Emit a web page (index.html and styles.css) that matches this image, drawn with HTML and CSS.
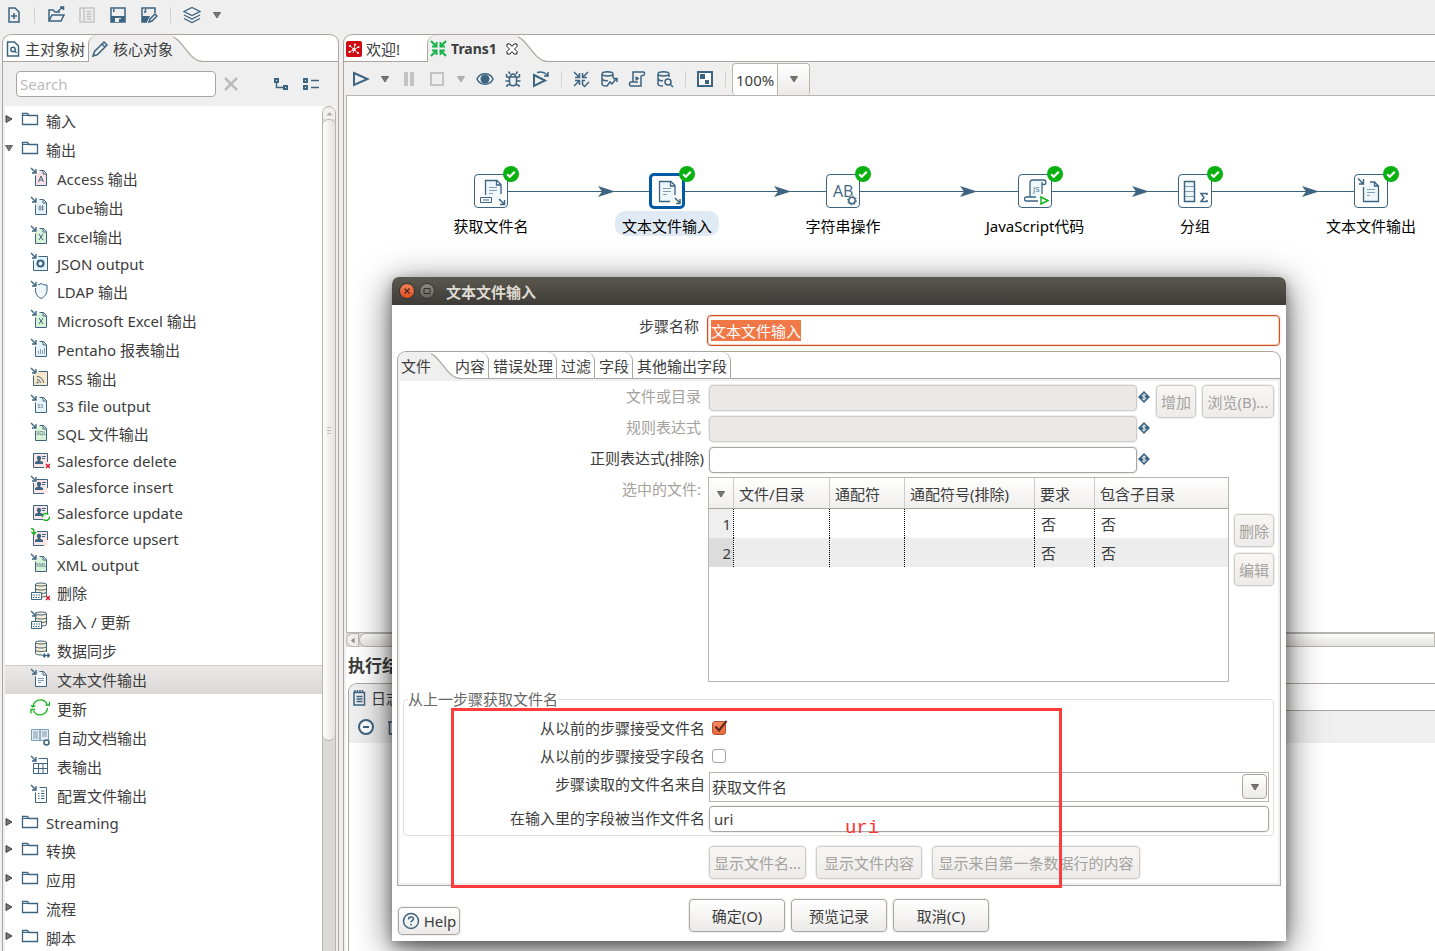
FILE: index.html
```html
<!DOCTYPE html>
<html lang="zh-CN">
<head>
<meta charset="utf-8">
<title>Trans1</title>
<link rel="stylesheet" href="styles.css">
</head>
<body>
<svg class="defs" aria-hidden="true">
  <defs>
    <symbol id="in" viewBox="0 0 20 20"><path class="s a" d="M1 1l4 4M6 2V6H2"/></symbol>
    <symbol id="page" viewBox="0 0 20 20"><path d="M5.500 8.500V18.500H16.500V7L13 3.500H9.500L5.500 8.500z" stroke="none"/><path class="s n" d="M5.500 8.500V18.500H16.500V6.500L13.500 3.500H9.500M13 3.500V7H16.500"/></symbol>
    <symbol id="sq" viewBox="0 0 20 20"><path d="M3.500 8.500V18.500H17.500V4.500H8.500L3.500 8.500z" stroke="none"/><path class="s n" d="M3.500 8.500V18.500H17.500V4.500H8.500"/></symbol>
    <symbol id="card" viewBox="0 0 20 20"><path d="M3.500 4.500h14v14h-14z" fill="#fbe4e6" stroke="none"/><path class="s n" d="M14 18.500H3.500V4.500h14V13"/><circle class="f" cx="9" cy="9" r="2.200"/><path class="f" d="M5 15v-2l3-1.500V10h2v1.500l3 1.500v2z"/><path class="s n" d="M12 7.500h4M12 9.500h3"/></symbol>
    <symbol id="db" viewBox="0 0 20 20"><path d="M5.500 3.500c0-2 11-2 11 0v11c0 2-11 2-11 0z" fill="#fbeed2"/><path class="s n" d="M5.500 3.500c0-2 11-2 11 0v11c0 2-11 2-11 0zM5.500 3.500c0 2 11 2 11 0M5.500 7.500c0 2 11 2 11 0M5.500 11c0 2 11 2 11 0"/></symbol>
    <symbol id="grid" viewBox="0 0 20 20"><path d="M1.500 11.500h10v7h-10z" fill="#fff" stroke="#3d6480"/><path class="s n" d="M1 14h11M3 16.500h7" stroke-dasharray="1.500 1"/></symbol>
    <symbol id="del" viewBox="0 0 20 20"><path d="M16 15l4 4m0-4l-4 4" stroke="#d8152c" stroke-width="1.500"/></symbol>
    <symbol id="folder" viewBox="0 0 18 16"><path class="s m" d="M1.500 13.500V2.500H6.500L8 4.500H16.500V13.500z"/><path class="s n" d="M1.500 4.500H8"/></symbol>
    <symbol id="right" viewBox="0 0 8 10"><path d="M1 1.500L7 5L1 8.500z" fill="#777" stroke="#444"/></symbol>
    <symbol id="down" viewBox="0 0 8 8"><path d="M.500 1.500h7L4 7z" fill="#777" stroke="#666"/></symbol>
    <symbol id="check" viewBox="0 0 16 16"><circle cx="8" cy="8" r="8" fill="#0bb011"/><path d="M4.200 8.200l2.600 2.600 5-5" stroke="#fff" stroke-width="2.200" fill="none"/></symbol>
    <symbol id="var" viewBox="0 0 12 12"><path class="f" d="M6 0l6 6-6 6-6-6z"/><path d="M8 4.300C7 3.200 4.300 3.500 4.300 4.800S7.800 6 7.800 7.300 5 8.900 4 7.700M6 2.500v7" stroke="#fff" stroke-width=".9" fill="none"/></symbol>
    <symbol id="curve" viewBox="0 0 38 28"><path d="M0 .500C18 .500 22 27.500 38 27.500V28H0z" fill="#efefef"/><path d="M0 .500C18 .500 22 27.500 38 27.500" fill="none" stroke="#aaa69f" stroke-width="1.200"/></symbol>
    <symbol id="floppy" viewBox="0 0 18 18"><path class="s t" d="M2 2h14v14H2z"/><path class="f" d="M2 10h14v6H2zM4 3h1.500v3H4z"/><path d="M6 12h6v4H6z" fill="#efefef"/><path class="f" d="M10 13h2v3h-2z"/></symbol>
  </defs>
</svg>

<header class="main-bar">
  <button class="tool" aria-label="新建"><svg width="18" height="18" viewBox="0 0 18 18"><path class="s t" d="M4 2h6l4 4v10H4zM9 7v6M6 10h6"/></svg></button>
  <i class="sep"></i>
  <button class="tool" aria-label="打开"><svg width="18" height="18" viewBox="0 0 18 18"><path class="s t" d="M2 15V4h4l2 2h5M2 15L5 9h12l-3 6zM11 5l5-4M13 1h3.500v3"/></svg></button>
  <button class="tool" aria-label="浏览" disabled><svg width="18" height="18" viewBox="0 0 18 18"><path d="M2 2h14v14H2zM6 2v14M8.500 5.500h5M8.500 8h5M8.500 10.500h5M8.500 13h5" fill="none" stroke="#c3c3c3" stroke-width="1.500"/></svg></button>
  <button class="tool" aria-label="保存"><svg width="18" height="18"><use href="#floppy"/></svg></button>
  <button class="tool" aria-label="另存为"><svg width="18" height="18" viewBox="0 0 18 18"><path class="s t" d="M7 16H2V2h13v5M4 6h1.500V3"/><path class="f" d="M2 10h8l-3 6H2z"/><path class="s t" d="M9 16l1-3 5-5 2 2-5 5z"/></svg></button>
  <i class="sep"></i>
  <button class="tool" aria-label="视图"><svg width="18" height="18" viewBox="0 0 18 18"><path class="s m" d="M9 1.500l8 4-8 4-8-4zM1 9l8 4 8-4M1 12.500l8 4 8-4"/></svg></button>
  <button class="caret" aria-label="视图菜单"><svg width="8" height="8"><use href="#down"/></svg></button>
</header>

<main class="workspace">
  <aside class="side">
    <nav class="tabs">
      <button class="tab"><svg width="16" height="18" viewBox="0 0 16 18"><path class="s t" d="M2.500 2h7L13.500 6v10H2.500z"/><circle class="s t" cx="8" cy="9.500" r="2.200"/><path class="s t" d="M9.500 11l2 2"/></svg>主对象树</button>
      <button class="tab active"><svg width="18" height="18" viewBox="0 0 18 18"><path class="s t" d="M2 16l1.500-4.500L13 2l3 3-9.500 9.500zM11 4l3 3"/></svg>核心对象</button><svg class="curve" width="38" height="28"><use href="#curve"/></svg>
    </nav>
    <div class="finder">
      <input class="search" type="text" placeholder="Search" aria-label="Search">
      <button class="tool" aria-label="清除"><svg width="16" height="16" viewBox="0 0 16 16"><path d="M2 2l12 12M14 2L2 14" stroke="#bcbcbc" stroke-width="2.500"/></svg></button>
      <span class="grow"></span>
      <button class="tool" aria-label="展开"><svg width="16" height="16" viewBox="0 0 16 16"><path class="s b" d="M2 3h3v3H2zM11 10h3v3h-3z"/><path class="s t" d="M3.500 6v5.500H10"/></svg></button>
      <button class="tool" aria-label="折叠"><svg width="18" height="16" viewBox="0 0 18 16"><path class="s b" d="M2 3h3v3H2zM2 10h3v3H2z"/><path class="s t" d="M9 4.500h8M9 11.500h8"/></svg></button>
    </div>
    <div class="tree-wrap">
      <ul class="tree">
        <li class="dir"><svg class="tw"><use href="#right"/></svg><svg class="fo"><use href="#folder"/></svg>输入</li>
        <li class="dir"><svg class="tw"><use href="#down"/></svg><svg class="fo"><use href="#folder"/></svg>输出</li>
        <li><svg class="ic" viewBox="0 0 20 20"><use href="#in"/><use href="#page" fill="#fde3e6"/><path class="s n" d="M8.500 15L11 9l2.500 6M9.500 13h3"/></svg>Access 输出</li>
        <li><svg class="ic" viewBox="0 0 20 20"><use href="#in"/><use href="#page" fill="#e8f4fb"/><path class="s h" d="M10 9v6M12.500 9v6M8 11h6M8 13h6"/></svg>Cube输出</li>
        <li><svg class="ic" viewBox="0 0 20 20"><use href="#in"/><use href="#page" fill="#d8f2d8"/><path class="s n" d="M9 9l4 6M13 9l-4 6"/></svg>Excel输出</li>
        <li class="lat"><svg class="ic" viewBox="0 0 20 20"><use href="#in"/><use href="#sq" fill="#e8f4fb"/><circle cx="10.500" cy="11.500" r="3" fill="none" stroke="#3d6480" stroke-width="2.200"/></svg>JSON output</li>
        <li><svg class="ic" viewBox="0 0 20 20"><use href="#in"/><path d="M5.500 8v2c0 4 2 7 5.500 8.500 3.500-1.500 6-4.500 6-8.500V5c-3 0-4-.500-6-1.500L8 5" fill="#eef7fc" stroke="#3d6480"/></svg>LDAP 输出</li>
        <li><svg class="ic" viewBox="0 0 20 20"><use href="#in"/><use href="#page" fill="#d8f2d8"/><path class="s n" d="M9 9l4 6M13 9l-4 6"/></svg>Microsoft Excel 输出</li>
        <li><svg class="ic" viewBox="0 0 20 20"><use href="#in"/><use href="#page" fill="#e8f4fb"/><path class="s h" d="M8.500 16v-3M10.500 16v-5M12.500 16v-4M14.500 16v-6"/></svg>Pentaho 报表输出</li>
        <li><svg class="ic" viewBox="0 0 20 20"><use href="#in"/><use href="#sq" fill="#fbe6c8"/><path class="s n" d="M7 12.500a3.500 3.500 0 0 1 3.500 3.500M7 9.500a6.500 6.500 0 0 1 6.500 6.500"/><circle class="f" cx="7.500" cy="15.500" r="1"/></svg>RSS 输出</li>
        <li class="lat"><svg class="ic" viewBox="0 0 20 20"><use href="#in"/><use href="#page" fill="#e8f4fb"/><text class="tiny" x="7.500" y="14">S3</text></svg>S3 file output</li>
        <li><svg class="ic" viewBox="0 0 20 20"><use href="#in"/><use href="#page" fill="#d8f2d8"/><text class="tiny" x="6.500" y="13">SQL</text></svg>SQL 文件输出</li>
        <li class="lat"><svg class="ic" viewBox="0 0 20 20"><use href="#card"/><use href="#del"/></svg>Salesforce delete</li>
        <li class="lat"><svg class="ic" viewBox="0 0 20 20"><use href="#card"/><path d="M0 0h7v8H0z" fill="#fff"/><use href="#in"/></svg>Salesforce insert</li>
        <li class="lat"><svg class="ic" viewBox="0 0 20 20"><use href="#card"/><circle cx="16" cy="16" r="3.500" fill="#fff" stroke="#15b01a" stroke-width="1.500" stroke-dasharray="8 2.500"/></svg>Salesforce update</li>
        <li class="lat"><svg class="ic" viewBox="0 0 20 20"><use href="#card"/><path d="M0 0h7v8H0z" fill="#fff"/><path d="M1 1.500c3 0 3 2 3 5M1.500 5L4 7.500 6 5" fill="none" stroke="#15b01a" stroke-width="1.400"/></svg>Salesforce upsert</li>
        <li class="lat"><svg class="ic" viewBox="0 0 20 20"><use href="#in"/><use href="#page" fill="#d8f2d8"/><text class="tiny" x="6" y="14">XML</text></svg>XML output</li>
        <li><svg class="ic" viewBox="0 0 20 20"><use href="#db"/><use href="#grid"/><use href="#del"/></svg>删除</li>
        <li><svg class="ic" viewBox="0 0 20 20"><use href="#db"/><path d="M0 0h7v7H0z" fill="#fff"/><use href="#in"/><use href="#grid"/></svg>插入 / 更新</li>
        <li><svg class="ic" viewBox="0 0 20 20"><use href="#db"/><path d="M12 13h8v7h-8z" fill="#fff"/><path class="s m" d="M13 16.500h6.500M15 14.500l-2 2 2 2M17.500 14.500l2 2-2 2"/></svg>数据同步</li>
        <li class="sel"><svg class="ic" viewBox="0 0 20 20"><use href="#in"/><use href="#page" fill="#f2f8fc"/><path class="s h" d="M8 10.500h6M8 12.500h6M8 14.500h3"/></svg>文本文件输出</li>
        <li><svg class="ic" viewBox="0 0 20 20"><path d="M3 9a7.500 7.500 0 0 1 14-2M17.500 11a7.500 7.500 0 0 1-14 3M19.500 4.500V8H15.500M1 16.500v-4h4M1 8.500l2 1.500 2.500-1.500" fill="none" stroke="#15b01a" stroke-width="1.300"/></svg>更新</li>
        <li><svg class="ic" viewBox="0 0 20 20"><path d="M1.500 3.500h8.500v11H1.500zM10 3.500h8.500v11H10z" fill="#e3edf4" stroke="#7f9db2"/><path class="s h" d="M3 6h5M3 8h5M3 10h5M3 12h5M12 6h5M12 8h5M12 10h5"/><circle cx="16.500" cy="16.500" r="2.500" fill="#fff" stroke="#3d6480" stroke-width="1.500"/></svg>自动文档输出</li>
        <li><svg class="ic" viewBox="0 0 20 20"><use href="#in"/><path class="s n" d="M3.500 8.500v10h14v-15h-9M3.500 8.500h14M3.500 13.500h14M8.500 8.500v10M13 8.500v10"/></svg>表输出</li>
        <li><svg class="ic" viewBox="0 0 20 20"><use href="#in"/><path class="s n" d="M5.500 8.500v10h11v-15h-7M8 9.500h1.500M8 12h1.500M8 14.500h1.500M11 7h3.500M11 9.500h3.500M11 12h3.500M11 14.500h3.500"/></svg>配置文件输出</li>
        <li class="dir lat"><svg class="tw"><use href="#right"/></svg><svg class="fo"><use href="#folder"/></svg>Streaming</li>
        <li class="dir"><svg class="tw"><use href="#right"/></svg><svg class="fo"><use href="#folder"/></svg>转换</li>
        <li class="dir"><svg class="tw"><use href="#right"/></svg><svg class="fo"><use href="#folder"/></svg>应用</li>
        <li class="dir"><svg class="tw"><use href="#right"/></svg><svg class="fo"><use href="#folder"/></svg>流程</li>
        <li class="dir"><svg class="tw"><use href="#right"/></svg><svg class="fo"><use href="#folder"/></svg>脚本</li>
      </ul>
      <div class="vscroll"><div class="up"><svg width="7" height="5" viewBox="0 0 7 5"><path d="M3.500 1L6.500 4.500h-6z" fill="#b0ada8"/></svg></div><div class="thumb"><i></i></div></div>
    </div>
  </aside>

  <section class="editor">
    <nav class="tabs">
      <button class="tab first"><svg width="16" height="16" viewBox="0 0 16 16"><rect width="16" height="16" rx="2" fill="#cf0a12"/><path d="M8 8.500L4 5M8 8.500l1-5M8 8.500l4.500-2.500M8 8.500l4 3.500M8 8.500L3.500 11M8 8.500L7 12" stroke="#fff" stroke-width=".9"/><g fill="#fff"><circle cx="8" cy="8.500" r="1.500"/><circle cx="4" cy="5" r="1.100"/><circle cx="9" cy="3.500" r="1"/><circle cx="12.500" cy="6" r="1.100"/><circle cx="12" cy="12" r="1.100"/><circle cx="3.500" cy="11" r="1.100"/></g></svg>欢迎!</button>
      <button class="tab active bold"><svg width="17" height="17" viewBox="0 0 17 17"><path d="M1 1l5 5M6.500 2v4.500H2M16 1l-5 5M10.500 2v4.500H15M1 16l5-5M6.500 15v-4.500H2M16 16l-5-5M10.500 15v-4.500H15" stroke="#18b24b" stroke-width="2" fill="none"/></svg>Trans1<svg class="x" width="12" height="12" viewBox="0 0 12 12"><path d="M1 1h3l2 2.500L8 1h3v2.500L8.500 6 11 8.500V11H8L6 8.500 4 11H1V8.500L3.500 6 1 3.500z" fill="#fff" stroke="#222"/></svg></button><svg class="curve" width="38" height="28"><use href="#curve"/></svg>
    </nav>
    <div class="editor-bar">
      <button class="tool" aria-label="运行"><svg width="18" height="18" viewBox="0 0 18 18"><path d="M2 3l13.500 6L2 15z" fill="none" stroke="#3d6480" stroke-width="2"/></svg></button>
      <button class="caret" aria-label="运行选项"><svg width="8" height="8"><use href="#down"/></svg></button>
      <button class="tool" aria-label="暂停" disabled><svg width="18" height="18" viewBox="0 0 18 18"><path d="M4 2h4v14H4zM10 2h4v14h-4z" fill="#c3c3c3"/></svg></button>
      <button class="tool" aria-label="停止" disabled><svg width="18" height="18" viewBox="0 0 18 18"><path d="M3 3h12v12H3z" fill="none" stroke="#c3c3c3" stroke-width="2"/></svg></button>
      <button class="caret dim" aria-label="停止选项" disabled><svg width="8" height="8"><use href="#down"/></svg></button>
      <button class="tool" aria-label="预览"><svg width="18" height="18" viewBox="0 0 18 18"><path class="s t" d="M1 9c3-7 13-7 16 0-3 7-13 7-16 0z"/><circle class="f" cx="9" cy="9" r="4.500"/></svg></button>
      <button class="tool" aria-label="调试"><svg width="18" height="18" viewBox="0 0 18 18"><path class="s t" d="M5.500 7h7v5c0 5-7 5-7 0zM6.500 7c0-4 5-4 5 0M6 4L4.500 1.500M12 4l1.500-2.500M5.500 8L2.500 6.500V4M12.500 8l3-1.500V4M5.500 11H1.500M12.500 11h4M6 14l-3 1.500V17M12 14l3 1.500V17"/></svg></button>
      <button class="tool" aria-label="重放"><svg width="18" height="18" viewBox="0 0 18 18"><path class="s b" d="M2 5l11 5.500L2 16z"/><path class="s t" d="M5 2.500c5-1.500 8 0 10.500 3M16 2v4h-4"/></svg></button>
      <i class="sep"></i>
      <button class="tool" aria-label="校验"><svg width="18" height="18" viewBox="0 0 18 18"><path class="s t" d="M2 2l5 5M7.500 3v4.500H3M16 2l-5 5M10.500 3v4.500H15M2 16l5-5M7.500 15v-4.500H3M10.500 15v-4.500H13M10 14l2.500 2.500L17 12"/></svg></button>
      <button class="tool" aria-label="影响分析"><svg width="18" height="18" viewBox="0 0 18 18"><path class="s t" d="M2 4c0-3 11-3 11 0v4M2 4v10c0 1.500 2 2 5 2M2 4c0 2.500 11 2.500 11 0M2 9c1 1.500 4 2 6 1.500M7 16l3-4 2 2 4-5M13 8.500h4V12"/></svg></button>
      <button class="tool" aria-label="SQL"><svg width="18" height="18" viewBox="0 0 18 18"><path class="s t" d="M5 12V2h10.500c1.500 0 1.500 3.500-.500 3.500h-1.500M13 5.500V16H3c-2 0-2-4 0-4h7"/><path class="f" d="M7.500 6l4 2.500-4 2.500z"/></svg></button>
      <button class="tool" aria-label="浏览数据库"><svg width="18" height="18" viewBox="0 0 18 18"><path class="s t" d="M2 4c0-3 11-3 11 0v3M2 4v10c0 1.500 2 2 5 2M2 4c0 2.500 11 2.500 11 0M2 9c1 1.500 3 2 5 1.500"/><circle class="s t" cx="12" cy="12" r="3"/><path class="s t" d="M14 14l3 3"/></svg></button>
      <i class="sep"></i>
      <button class="tool" aria-label="结果"><svg width="18" height="18" viewBox="0 0 18 18"><path d="M2 2h14v14H2z" fill="#fff" stroke="#3d6480" stroke-width="2"/><path class="f" d="M4 4h5v5H4zM9 10h4v4H9z"/></svg></button>
      <i class="sep"></i>
      <div class="zoom"><select aria-label="缩放"><option>100%</option></select><span class="zoom-btn"><svg width="8" height="8"><use href="#down"/></svg></span></div>
    </div>

    <div class="canvas">
      <svg class="hops" width="1089" height="200" viewBox="0 0 1089 200">
        <path d="M145 96.500H1025" stroke="#3d6480"/>
        <path class="f" d="M251 91l17 5.500-17 5.500 4-5.500zM427 91l17 5.500-17 5.500 4-5.500zM613 91l17 5.500-17 5.500 4-5.500zM785 91l17 5.500-17 5.500 4-5.500zM955 91l17 5.500-17 5.500 4-5.500z"/>
      </svg>
      <div class="node n1"><div class="box"><svg width="32" height="32" viewBox="0 0 32 32"><path d="M10.500 5.500H23l3 3V25H10.500z" fill="#eef7fc"/><path class="s m" d="M10.500 20V5.500H22l4 4V19M21.500 6v4H26"/><path class="s h" d="M14 12.500h8M14 15.500h8M14 18.500h4"/><path class="s n" d="M5.500 22.500h11v5h-11zM8 25h6"/><path class="s t" d="M24 24l5 5M29.500 25v4.500H25"/></svg></div><svg class="ok"><use href="#check"/></svg><span>获取文件名</span></div>
      <div class="node n2 picked"><div class="box"><svg width="32" height="32" viewBox="0 0 32 32"><path d="M8.500 6.500H20l4 4V26.500H8.500z" fill="#eef7fc"/><path class="s m" d="M19 26.500H8.500V6.500H20l4 4V20M19.500 7v4H24"/><path class="s h" d="M12 13.500h8M12 16.500h8M12 19.500h4"/><path class="s t" d="M24 23l5 5M29 24v4.500H25"/></svg></div><svg class="ok"><use href="#check"/></svg><span>文本文件输入</span></div>
      <div class="node n3"><div class="box"><svg width="32" height="32" viewBox="0 0 32 32"><text class="ab" x="6" y="22">AB</text><circle cx="25" cy="25.500" r="5" fill="#fff"/><circle class="s t" cx="25" cy="25.500" r="3.200"/><circle cx="25" cy="25.500" r="4.500" fill="none" stroke="#3d6480" stroke-dasharray="1.500 2"/></svg></div><svg class="ok"><use href="#check"/></svg><span>字符串操作</span></div>
      <div class="node n4"><div class="box"><svg width="32" height="32" viewBox="0 0 32 32"><path d="M11 6h11v18H9z" fill="#eef7fc"/><path class="s m" d="M11 22V8c0-2 1-3 3-3h11c2.500 0 2.500 4.500 0 4.500h-2M23 7v12M19 26H7c-2 0-2-4 0-4h10"/><text class="js" x="14" y="17">JS</text><path d="M22 22l7 3.500-7 3.500z" fill="#fff" stroke="#0bb011" stroke-width="1.400"/></svg></div><svg class="ok"><use href="#check"/></svg><span>JavaScript代码</span></div>
      <div class="node n5"><div class="box"><svg width="32" height="32" viewBox="0 0 32 32"><path d="M5.500 6.500h10v20h-10z" fill="#eef7fc" stroke="#3d6480" stroke-width="1.500"/><path class="s h" d="M6 11.500h9M6 16.500h9M6 21.500h9"/><path class="s t" d="M28 20v-1.500h-6l3 4-3 4h6V25"/></svg></div><svg class="ok"><use href="#check"/></svg><span>分组</span></div>
      <div class="node n6"><div class="box"><svg width="32" height="32" viewBox="0 0 32 32"><path d="M8.500 12V26.500h15V12l-4-4h-6z" fill="#eef7fc"/><path class="s m" d="M8.500 12V26.500h15V11l-4-4H15M19.500 7v4h4"/><path class="s h" d="M12 14.500h8M12 17.500h8M12 20.500h3"/><path class="s t" d="M3 3.500l5 5M8.500 4v5H4"/></svg></div><svg class="ok"><use href="#check"/></svg><span>文本文件输出</span></div>
    </div>
    <div class="hscroll"><div class="left"><svg width="5" height="7" viewBox="0 0 5 7"><path d="M4.500.500v6L1 3.500z" fill="#8d8a86"/></svg></div><div class="thumb"></div></div>

    <section class="results">
      <h2>执行结果</h2>
      <div class="results-tabs"><button class="tab"><svg width="16" height="18" viewBox="0 0 16 18"><path class="s t" d="M3 3.500h10.500V16H3zM5.500 7.500h6M5.500 10h6M5.500 12.500h6"/><path class="s t" d="M4 1v3M6.500 1v3M9 1v3M11.500 1v3"/></svg>日志</button></div>
      <div class="results-bar">
        <button class="tool" aria-label="隐藏"><svg width="18" height="18" viewBox="0 0 18 18"><circle cx="9" cy="9" r="7" fill="#fff" stroke="#3d6480" stroke-width="2"/><path class="s b" d="M6 9h6"/></svg></button>
        <button class="tool" aria-label="清除日志"><svg width="16" height="18" viewBox="0 0 16 18"><path class="s t" d="M2 4h12M3.500 4v12h9V4M6 2h4"/></svg></button>
      </div>
      <div class="results-body"></div>
    </section>
  </section>
</main>

<section class="dialog" role="dialog" aria-labelledby="dlg-title">
  <div class="titlebar">
    <button class="orb close" aria-label="关闭"><svg width="8" height="8" viewBox="0 0 8 8"><path d="M1.500 1.500l5 5m0-5l-5 5" stroke="#4a2418" stroke-width="1.200"/></svg></button>
    <button class="orb" aria-label="最大化"><svg width="8" height="8" viewBox="0 0 8 8"><path d="M1 1.500h6v5H1z" fill="none" stroke="#33312d"/></svg></button>
    <h1 id="dlg-title">文本文件输入</h1>
  </div>
  <div class="dialog-body">
    <div class="name-row"><label for="step">步骤名称</label><input id="step" type="text" value="文本文件输入"></div>

    <div class="frame">
      <nav class="tabs">
        <button class="tab active">文件</button><svg class="curve" width="38" height="28"><use href="#curve"/></svg>
        <button class="tab r tuck">内容</button><button class="tab r">错误处理</button><button class="tab r">过滤</button><button class="tab r">字段</button><button class="tab r">其他输出字段</button>
      </nav>
      <div class="pane">
        <div class="paths">
          <div class="rows">
            <div class="row off"><label for="f1">文件或目录</label><input id="f1" type="text" disabled><svg class="var"><use href="#var"/></svg></div>
            <div class="row off"><label for="f2">规则表达式</label><input id="f2" type="text" disabled><svg class="var"><use href="#var"/></svg></div>
            <div class="row"><label class="wide" for="f3">正则表达式(排除)</label><input id="f3" type="text"><svg class="var"><use href="#var"/></svg></div>
          </div>
          <div class="acts"><button class="btn narrow" disabled>增加</button><button class="btn browse" disabled>浏览(B)...</button></div>
        </div>
        <div class="chosen">
          <span class="off-label">选中的文件:</span>
          <div class="table-box">
            <table>
              <colgroup><col class="c1"><col class="c2"><col class="c3"><col class="c4"><col class="c5"><col></colgroup>
              <thead><tr><th><svg width="8" height="8"><use href="#down"/></svg></th><th>文件/目录</th><th>通配符</th><th>通配符号(排除)</th><th>要求</th><th>包含子目录</th></tr></thead>
              <tbody><tr><td>1</td><td></td><td></td><td></td><td>否</td><td>否</td></tr><tr><td>2</td><td></td><td></td><td></td><td>否</td><td>否</td></tr></tbody>
            </table>
          </div>
          <div class="stack"><button class="btn narrow" disabled>删除</button><button class="btn narrow" disabled>编辑</button></div>
        </div>

        <fieldset>
          <legend>从上一步骤获取文件名</legend>
          <div class="frow"><label for="a1">从以前的步骤接受文件名</label><span class="cb"><input id="a1" type="checkbox" checked><svg width="16" height="16" viewBox="0 0 16 16"><path d="M3.500 7.500l3.500 4L14.500 2" fill="none" stroke="#5f2d1b" stroke-width="2.200"/></svg></span></div>
          <div class="frow"><label for="a2">从以前的步骤接受字段名</label><span class="cb"><input id="a2" type="checkbox"></span></div>
          <div class="frow tall"><label for="a3">步骤读取的文件名来自</label><div class="combo"><select id="a3"><option>获取文件名</option></select><span class="combo-btn"><svg width="8" height="8"><use href="#down"/></svg></span></div></div>
          <div class="frow last"><label for="a4">在输入里的字段被当作文件名</label><input id="a4" type="text" value="uri"></div>
        </fieldset>

        <div class="shows"><button class="btn s1" disabled>显示文件名...</button><button class="btn s2" disabled>显示文件内容</button><button class="btn s3" disabled>显示来自第一条数据行的内容</button></div>
      </div>
    </div>

    <footer>
      <button class="btn help"><svg width="18" height="18" viewBox="0 0 18 18"><circle class="s t" cx="9" cy="9" r="7.500"/><path class="s t" d="M6.500 7.500c0-3.500 5-3 5-.500 0 1.500-2.500 1.500-2.500 3.500M9 12v1.500"/></svg>Help</button>
      <div class="confirm"><button class="btn">确定(O)</button><button class="btn">预览记录</button><button class="btn">取消(C)</button></div>
    </footer>
  </div>
  <div class="mark"><span>uri</span></div>
</section>
<script src="app.js"></script>
</body>
</html>
```
FILE: styles.css
```css
* { box-sizing: border-box; }
body { margin: 0; height: 100vh; display: flex; flex-direction: column; overflow: hidden; background: #efefef; color: #3c3c3c; font: 15px/20px "Noto Sans", "Noto Sans CJK SC", sans-serif; }
button, input, select { font: inherit; color: inherit; }
button { padding: 0; border: 0; background: none; }
svg { flex: none; display: block; }
.defs { position: absolute; width: 0; height: 0; }
.s { fill: none; stroke: #3d6480; }
.n { stroke-width: 1; }
.m { stroke-width: 1.3; }
.a { stroke-width: 1.4; }
.h { stroke-width: 1; opacity: .6; }
.t { stroke-width: 1.5; }
.b { stroke-width: 2; }
.f { fill: #3d6480; }
.tiny { font-size: 5px; fill: #3d6480; }
.grow { flex: 1; }

.main-bar { display: flex; align-items: center; height: 34px; flex: none; padding-bottom: 4px; }
.tool { display: flex; align-items: center; justify-content: center; width: 28px; height: 28px; flex: none; }
.main-bar .tool { width: 31px; }
.main-bar .tool:first-child { width: 28px; }
.caret { display: flex; align-items: center; justify-content: center; width: 20px; height: 28px; flex: none; }
.dim { opacity: .5; }
.sep { width: 12px; height: 16px; flex: none; background: linear-gradient(#d4d2d0, #d4d2d0) center / 1px 100% no-repeat; }

.workspace { flex: 1; min-height: 0; display: flex; gap: 4px; padding-left: 2px; }
.side { width: 337px; flex: none; display: flex; flex-direction: column; border: 1px solid #aaa69f; border-width: 0 1px 0 1px; border-radius: 9px 9px 0 0; }
.editor { flex: 1; min-width: 0; display: flex; flex-direction: column; border-left: 1px solid #aaa69f; border-radius: 9px 0 0 0; }
.tabs { position: relative; display: flex; height: 28px; flex: none; background: #fff; border-top: 1px solid #aaa69f; border-radius: 9px 9px 0 0; box-shadow: inset 0 -1px #aaa69f; }
.editor > .tabs { border-radius: 9px 0 0 0; }
.tab { display: flex; align-items: center; gap: 4px; height: 27px; padding: 0 3px 0 2px; white-space: nowrap; z-index: 1; }
.tab.active { background: #efefef; border-left: 1px solid #aaa69f; border-radius: 9px 0 0 0; padding-right: 0; }
.bold { font-weight: bold; font-size: 14px; }
.curve { margin: -1px 0 0 -8px; }
.x { margin-left: 5px; }
.first { width: 83px; }

.finder { display: flex; align-items: center; height: 44px; flex: none; padding: 0 12px 0 13px; }
.finder .tool { width: 30px; }
.search { width: 200px; height: 26px; border: 1px solid #aaa69f; border-radius: 4px; padding: 0 3px; background: #fff; }
.search::placeholder { color: #bcbcbc; opacity: 1; }
.tree-wrap { flex: 1; min-height: 0; display: flex; margin: 0 2px; background: #fff; }
.tree { flex: 1; margin: 0; padding: 0; list-style: none; overflow: hidden; }
.tree li { display: flex; align-items: center; height: 29px; padding: 0 0 0 25px; white-space: pre; }
.tree .lat { height: 26px; }
.tree .dir { padding-left: 0; }
.tree .sel { background: linear-gradient(#ebe9e8, #dad7d5); border-top: 1px solid #cfcbc8; }
.ic { width: 20px; height: 20px; margin: 0 7px 4px 0; }
.tw { width: 8px; height: 10px; margin-bottom: 3px; }
.fo { width: 18px; height: 16px; margin: 0 7px 3px 8px; }
.vscroll { width: 14px; background: #dbd9d6; border: 1px solid #b8b4ae; border-width: 0 1px; border-radius: 7px 7px 0 0; display: flex; flex-direction: column; }
.vscroll .up { height: 13px; display: grid; place-items: center; background: #efefef; border-radius: 7px 7px 0 0; border-top: 1px solid #b8b4ae; }
.vscroll .thumb { height: 622px; display: grid; place-items: center; border: 1px solid #b8b4ae; border-width: 1px 0; border-radius: 7px; background: linear-gradient(90deg, #fdfdfd, #e5e3e1); }
.thumb i { width: 4px; height: 7px; background: repeating-linear-gradient(#bbb 0 1px, transparent 1px 3px); }

.editor-bar { display: flex; align-items: center; height: 33px; flex: none; padding-left: 3px; }
.zoom { position: relative; display: flex; width: 78px; height: 32px; margin-left: 1px; border: 1px solid #b8b4ae; border-bottom: 0; border-radius: 4px; background: #fff; }
.zoom select { flex: 1; appearance: none; border: 0; background: none; padding: 2px 3px 0; }
.zoom-btn { position: absolute; right: 0; top: 0; bottom: 0; width: 32px; border-left: 1px solid #b8b4ae; background: linear-gradient(#fff, #ebeae8); border-radius: 0 4px 4px 0; display: grid; place-items: center; pointer-events: none; }

.canvas { position: relative; flex: 1; min-height: 0; margin-left: 2px; overflow: hidden; background: #fff; border: 1px solid #b8b4ae; border-right: 0; color: #000; }
.hops { position: absolute; left: 0; top: -1px; }
.node { position: absolute; top: 78px; width: 120px; display: flex; flex-direction: column; align-items: center; gap: 8px; }
.n1 { left: 84px; } .n2 { left: 260px; } .n3 { left: 436px; } .n4 { left: 628px; } .n5 { left: 788px; } .n6 { left: 964px; }
.box { width: 34px; height: 34px; border: 1px solid #3d6480; border-radius: 4px; background: #fff; }
.picked .box { outline: 3px solid #005aa5; outline-offset: -2px; border-color: #005aa5; }
.node span { padding: 0 7px; line-height: 20px; white-space: nowrap; }
.picked span { background: #e0eaf4; border-radius: 12px; box-shadow: 0 -5px #e0eaf4; }
.ok { position: absolute; left: 72px; top: -8px; width: 16px; height: 16px; }
.ab { font: 16px "Open Sans", sans-serif; fill: #3d6480; }
.js { font: 8px "Open Sans", sans-serif; fill: #3d6480; }
.hscroll { display: flex; height: 14px; flex: none; margin-left: 2px; background: #dbd9d6; }
.hscroll .left { width: 13px; display: grid; place-items: center; border: 1px solid #b8b4ae; border-radius: 7px 0 0 7px; background: #efefef; }
.hscroll .thumb { flex: 1; border: 1px solid #b8b4ae; border-radius: 7px 0 0 7px; background: linear-gradient(#fdfdfd, #e5e3e1); }
.results { height: 304px; flex: none; display: flex; flex-direction: column; margin-left: 2px; background: #fff; }
.results h2 { margin: 0; height: 36px; padding: 7px 2px; font-size: 17px; line-height: 24px; }
.results-tabs { display: flex; height: 28px; margin-left: 2px; border: 1px solid #aaa69f; border-width: 1px 0 1px 1px; border-radius: 9px 0 0 0; }
.results-tabs .tab { background: #efefef; border-radius: 9px 0 0 0; }
.results-bar { display: flex; align-items: center; height: 32px; margin-left: 2px; padding-left: 3px; background: #efefef; border-left: 1px solid #aaa69f; }
.results-body { flex: 1; margin-left: 2px; border-left: 1px solid #aaa69f; }

.dialog { position: absolute; z-index: 10; left: 392px; right: 149px; top: 277px; background: #fff; border-radius: 7px 7px 0 0; box-shadow: 0 8px 36px rgba(0, 0, 0, .65), 0 4px 12px rgba(0, 0, 0, .3); }
.titlebar { display: flex; align-items: center; gap: 4px; height: 28px; padding-left: 7px; border-radius: 7px 7px 0 0; background: linear-gradient(#5b584f, #3d3b37); }
.titlebar h1 { margin: 2px 0 0 7px; font-size: 15px; line-height: 20px; color: #dfdbd2; }
.orb { width: 16px; height: 16px; display: grid; place-items: center; border: 1px solid #35332f; border-radius: 50%; background: linear-gradient(#8b8981, #64625c); }
.orb.close { background: linear-gradient(#f58059, #df4f20); }
.dialog-body { padding: 10px 5px 6px; }
.name-row { display: flex; height: 31px; gap: 8px; padding-right: 1px; }
.name-row label { width: 302px; text-align: right; line-height: 22px; }
.name-row input { flex: 1; min-width: 0; height: 31px; border: 1px solid #cf5329; border-radius: 4px; padding: 0 3px; outline: 0; box-shadow: inset 0 0 0 1px #fbcdbb, 0 0 0 1px #efefef; }
::selection { background: #f07746; color: #fff; }
.frame { margin-top: 5px; }
.frame .tab.active { padding: 0 0 0 3px; border-left: 0; }
.frame .tab.r { padding: 0 3px 0 4px; border-right: 1px solid #aaa69f; border-radius: 0 9px 0 0; }
.frame .tab.r.tuck { margin-left: -10px; }
.frame .tabs { border-right: 1px solid #aaa69f; border-left: 1px solid #aaa69f; border-radius: 9px 9px 0 0; }
.pane { border: 1px solid #aaa69f; border-top: 0; box-shadow: inset 0 0 0 2px #efefef; padding: 6px 6px 6px 5px; }
.paths { display: flex; justify-content: space-between; }
.rows { flex: 1; display: flex; flex-direction: column; gap: 5px; }
.row { display: flex; align-items: center; height: 26px; gap: 8px; }
.row label, .off-label { width: 298px; flex: none; text-align: right; line-height: 24px; padding-bottom: 5px; }
.row label.wide { width: 301px; margin-right: -3px; }
.row input { flex: 1; min-width: 0; height: 26px; border: 1px solid #aaa69f; border-radius: 4px; box-shadow: 0 0 0 1px #efefef; background: #fff; }
.row input:disabled { background: #eae9e8; border-color: #cfccc8; }
.off, .off-label { color: #a5a19c; }
.var { width: 12px; height: 12px; margin: 0 0 2px -7px; }
.acts { display: flex; gap: 6px; margin-left: 6px; }
.btn { display: flex; align-items: center; justify-content: center; gap: 4px; height: 33px; border: 1px solid #aaa69f; border-radius: 4px; background: linear-gradient(#fff, #ebeae8); box-shadow: 0 0 0 1px #efefef; white-space: nowrap; }
.btn:disabled { color: #a5a19c; border-color: #cfccc8; background: linear-gradient(#f7f6f5, #edecea); }
.narrow { width: 40px; }
.browse { width: 72px; }
.chosen { display: flex; margin-top: 4px; }
.off-label { margin-right: 7px; }
.table-box { flex: 1; height: 205px; border: 1px solid #b8b4ae; background: #fff; }
table { width: 100%; border-collapse: separate; border-spacing: 0; table-layout: fixed; }
.c1 { width: 24px; } .c2 { width: 96px; } .c3 { width: 75px; } .c4 { width: 130px; } .c5 { width: 60px; }
th { height: 31px; padding: 2px 0 0 6px; text-align: left; font-weight: normal; border-bottom: 1px solid #aaa69f; background: linear-gradient(#fff, #efeeec); }
th + th { border-left: 1px solid #cfccc8; padding-left: 5px; }
th:first-child { padding-left: 8px; }
td { height: 29px; padding: 0 0 0 6px; }
td + td { border-left: 1px dotted #000; }
td:first-child { padding: 0 2px 0 0; text-align: right; background: #efefef; }
tbody tr:nth-child(2) { background: #ededed; }
tbody tr:nth-child(2) td:first-child { background: #dcdcdc; }
.stack { display: flex; flex-direction: column; gap: 6px; margin: 37px 0 0 5px; }
fieldset { margin: 5px 0 0; min-width: 0; padding: 5px 4px 3px; border: 1px solid #e2e0de; border-radius: 4px; }
legend { padding: 0; line-height: 24px; color: #666; }
.frow { display: flex; height: 28px; gap: 4px; }
.frow.tall { height: 34px; }
.frow.last { height: 26px; }
.frow > label { width: 297px; flex: none; text-align: right; line-height: 24px; }
.cb { position: relative; width: 16px; height: 24px; padding-top: 5px; margin-left: 3px; }
.cb input { appearance: none; display: block; width: 14px; height: 14px; margin: 0; border: 1px solid #aaa69f; border-radius: 3px; background: #fff; }
.cb input:checked { background: linear-gradient(#f58a63, #ec6a3c); border-color: #b5502c; }
.cb svg { position: absolute; left: 0; top: 3px; pointer-events: none; }
.combo { position: relative; flex: 1; height: 30px; border: 1px solid #b8b4ae; }
.combo select { width: 100%; height: 28px; appearance: none; border: 0; padding: 0 2px; background: none; }
.combo-btn { position: absolute; right: 1px; top: 1px; width: 25px; height: 25px; border: 1px solid #aaa69f; border-radius: 4px; background: linear-gradient(#fff, #ebeae8); display: grid; place-items: center; pointer-events: none; }
.frow > input { flex: 1; min-width: 0; height: 26px; border: 1px solid #aaa69f; border-radius: 4px; padding: 0 4px; box-shadow: 0 0 0 1px #efefef; }
.shows { display: flex; gap: 10px; margin: 10px 0 0 306px; }
.s1 { width: 97px; } .s2 { width: 106px; } .s3 { width: 208px; }
footer { display: grid; grid-template-columns: 1fr auto 1fr; align-items: start; padding-top: 13px; }
.help { width: 62px; height: 28px; margin: 8px 0 0 1px; }
.confirm { display: flex; gap: 6px; }
.confirm .btn { width: 96px; }
.mark { position: absolute; left: 59px; top: 431px; width: 611px; height: 180px; border: 3px solid #ff3b3b; pointer-events: none; }
.mark span { position: absolute; left: 391px; top: 106px; color: #f33; font: 19px/22px "Liberation Mono", monospace; }
```
FILE: app.js
```js
document.getElementById("step").select();
```
